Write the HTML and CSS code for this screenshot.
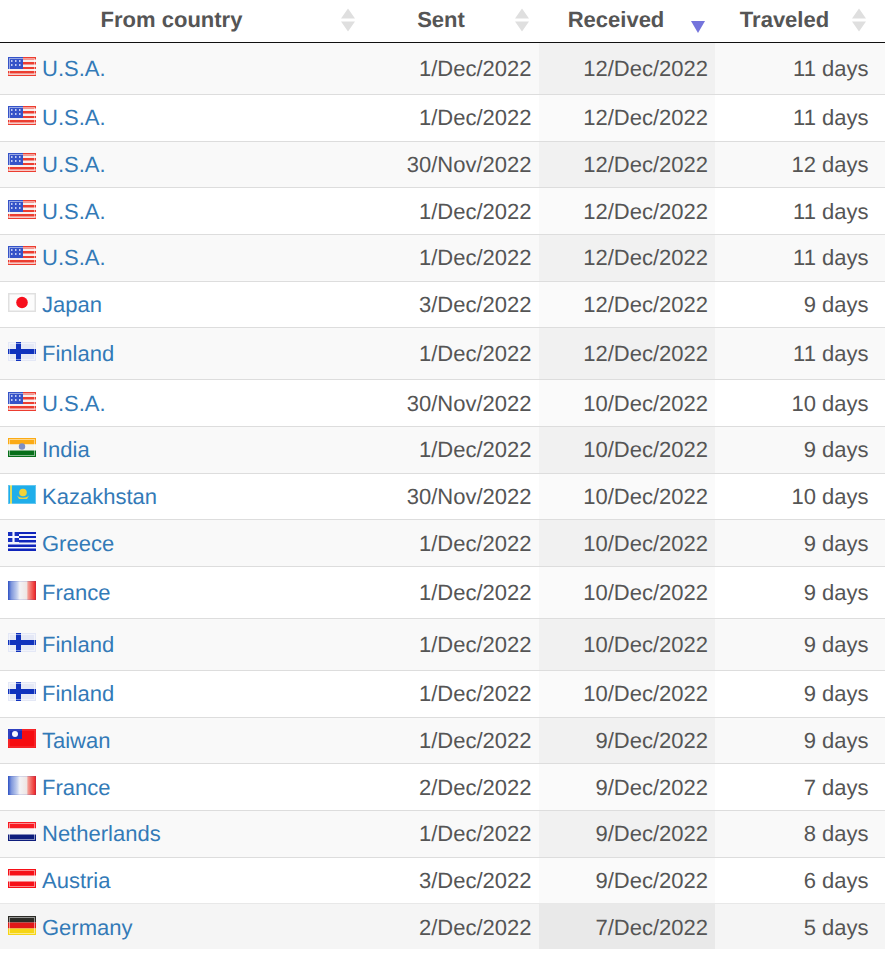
FILE: index.html
```html
<!DOCTYPE html>
<html lang="en">
<head>
<meta charset="utf-8">
<title>Postcards received</title>
<link rel="stylesheet" href="styles.css">
</head>
<body>
<svg class="defs" width="0" height="0" aria-hidden="true">
  <defs>
    <linearGradient id="frgrad" x1="0" x2="1" y1="0" y2="0">
      <stop offset="0" stop-color="#2f55c8"/><stop offset=".12" stop-color="#7f97dc"/><stop offset=".32" stop-color="#c3cfee"/><stop offset=".42" stop-color="#f3f3f6"/><stop offset=".66" stop-color="#efe6e4"/><stop offset=".72" stop-color="#f39a92"/><stop offset="1" stop-color="#ee1c1c"/>
    </linearGradient>
    <g id="gloss"><rect x="1.500" y="1.500" width="25" height="16" fill="none" stroke="#fff" stroke-opacity=".5"/></g>
    <symbol id="us" viewBox="0 0 28 19"><rect width="28" height="19" fill="#f6f0ee"/><path d="M0 0h28v2.500H0zM15 5h13v2.500H15zM15 10h13v2H15zM0 14h28v2.500H0zM0 17.500h28v1.500H0z" fill="#ec3d30"/><rect width="15" height="12" fill="#3553c8"/><path d="M3 4h1.500M7 4h1.500M11 4h1.500M3 8h1.500M7 8h1.500M11 8h1.500" stroke="#f0f4ff" stroke-width="1.400"/><use href="#gloss"/></symbol>
    <symbol id="jp" viewBox="0 0 28 19"><rect width="28" height="19" fill="#e0e0e0"/><rect x="1.500" y="1.500" width="25" height="16" fill="#fcfcfc"/><circle cx="14" cy="9.500" r="5.800" fill="#f70f1c"/></symbol>
    <symbol id="fi" viewBox="0 0 28 19"><rect width="28" height="19" fill="#e4e8f6"/><path d="M0 7h28v5H0zM8 0h5v19H8z" fill="#0f32bd"/><use href="#gloss"/></symbol>
    <symbol id="in" viewBox="0 0 28 19"><rect width="28" height="6.500" fill="#fbab14"/><rect y="6.500" width="28" height="6" fill="#f5f5ef"/><rect y="12.500" width="28" height="6.500" fill="#07701a"/><circle cx="14" cy="8.500" r="3.200" fill="#7d8fc4"/><use href="#gloss"/></symbol>
    <symbol id="kz" viewBox="0 0 28 19"><rect width="28" height="19" fill="#1faeea"/><rect x="2" width="2" height="19" fill="#dcdc60"/><circle cx="15" cy="7.500" r="3.800" fill="#f2d238"/><path d="M9 10.500c3 3 9 3 12 0l-2 3.500h-8z" fill="#e8d048"/><rect x=".5" y=".5" width="27" height="18" fill="none" stroke="#fff" stroke-opacity=".3"/></symbol>
    <symbol id="gr" viewBox="0 0 28 19"><rect width="28" height="19" fill="#f1f3fb"/><path d="M0 0h28v2H0zM11 4h17v2H11zM11 8h17v2.500H11zM0 12.500h28v2.500H0zM0 16.500h28v2.500H0z" fill="#0f24bb"/><rect width="11" height="10" fill="#1730c0"/><path d="M5.500 0v10M0 5h11" stroke="#f6f7ff" stroke-width="2.200"/></symbol>
    <symbol id="fr" viewBox="0 0 28 19"><rect width="28" height="19" fill="url(#frgrad)"/><rect x=".5" y=".5" width="27" height="18" fill="none" stroke="#2f45b0" stroke-opacity=".15"/></symbol>
    <symbol id="nl" viewBox="0 0 28 19"><rect width="28" height="6.500" fill="#f81a22"/><rect y="6.500" width="28" height="6" fill="#f8f8f8"/><rect y="12.500" width="28" height="6.500" fill="#0e1e7d"/><use href="#gloss"/></symbol>
    <symbol id="at" viewBox="0 0 28 19"><rect width="28" height="19" fill="#f61018"/><rect y="6.500" width="28" height="6" fill="#faf0f0"/><use href="#gloss"/></symbol>
    <symbol id="de" viewBox="0 0 28 19"><rect width="28" height="6.500" fill="#2b2b26"/><rect y="6.500" width="28" height="6" fill="#e01818"/><rect y="12.500" width="28" height="6.500" fill="#f6d514"/><use href="#gloss"/></symbol>
    <symbol id="tw" viewBox="0 0 28 19"><rect width="28" height="19" fill="#f60c10"/><rect width="14" height="10" fill="#1a2db8"/><circle cx="7" cy="5" r="3" fill="#f6f6ff"/><rect x="1" y="1" width="26" height="17" fill="none" stroke="#fff" stroke-opacity=".2"/></symbol>
  </defs>
</svg>
<table class="cards">
  <thead>
    <tr>
      <th class="col-from">From country<svg class="sort" viewBox="0 0 14 24"><path d="M7 0l7 10H0zM0 13h14l-7 10z"/></svg></th>
      <th class="col-sent">Sent<svg class="sort" viewBox="0 0 14 24"><path d="M7 0l7 10H0zM0 13h14l-7 10z"/></svg></th>
      <th class="col-recv">Received<svg class="sort sort-active" viewBox="0 0 14 12"><path d="M0 0h14l-7 12z"/></svg></th>
      <th class="col-trav">Traveled<svg class="sort" viewBox="0 0 14 24"><path d="M7 0l7 10H0zM0 13h14l-7 10z"/></svg></th>
    </tr>
  </thead>
  <tbody>
    <tr class="h51"><td><svg class="flag"><use href="#us"/></svg><a href="#">U.S.A.</a></td><td>1/Dec/2022</td><td>12/Dec/2022</td><td>11 days</td></tr>
    <tr class="h47"><td><svg class="flag"><use href="#us"/></svg><a href="#">U.S.A.</a></td><td>1/Dec/2022</td><td>12/Dec/2022</td><td>11 days</td></tr>
    <tr class="h46"><td><svg class="flag"><use href="#us"/></svg><a href="#">U.S.A.</a></td><td>30/Nov/2022</td><td>12/Dec/2022</td><td>12 days</td></tr>
    <tr class="h47 low"><td><svg class="flag"><use href="#us"/></svg><a href="#">U.S.A.</a></td><td>1/Dec/2022</td><td>12/Dec/2022</td><td>11 days</td></tr>
    <tr class="h47"><td><svg class="flag"><use href="#us"/></svg><a href="#">U.S.A.</a></td><td>1/Dec/2022</td><td>12/Dec/2022</td><td>11 days</td></tr>
    <tr class="h46"><td><svg class="flag"><use href="#jp"/></svg><a href="#">Japan</a></td><td>3/Dec/2022</td><td>12/Dec/2022</td><td>9 days</td></tr>
    <tr class="h52"><td><svg class="flag"><use href="#fi"/></svg><a href="#">Finland</a></td><td>1/Dec/2022</td><td>12/Dec/2022</td><td>11 days</td></tr>
    <tr class="h47 low"><td><svg class="flag"><use href="#us"/></svg><a href="#">U.S.A.</a></td><td>30/Nov/2022</td><td>10/Dec/2022</td><td>10 days</td></tr>
    <tr class="h47"><td><svg class="flag"><use href="#in"/></svg><a href="#">India</a></td><td>1/Dec/2022</td><td>10/Dec/2022</td><td>9 days</td></tr>
    <tr class="h46"><td><svg class="flag"><use href="#kz"/></svg><a href="#">Kazakhstan</a></td><td>30/Nov/2022</td><td>10/Dec/2022</td><td>10 days</td></tr>
    <tr class="h47 low"><td><svg class="flag"><use href="#gr"/></svg><a href="#">Greece</a></td><td>1/Dec/2022</td><td>10/Dec/2022</td><td>9 days</td></tr>
    <tr class="h52"><td><svg class="flag"><use href="#fr"/></svg><a href="#">France</a></td><td>1/Dec/2022</td><td>10/Dec/2022</td><td>9 days</td></tr>
    <tr class="h52"><td><svg class="flag"><use href="#fi"/></svg><a href="#">Finland</a></td><td>1/Dec/2022</td><td>10/Dec/2022</td><td>9 days</td></tr>
    <tr class="h47"><td><svg class="flag"><use href="#fi"/></svg><a href="#">Finland</a></td><td>1/Dec/2022</td><td>10/Dec/2022</td><td>9 days</td></tr>
    <tr class="h46"><td><svg class="flag"><use href="#tw"/></svg><a href="#">Taiwan</a></td><td>1/Dec/2022</td><td>9/Dec/2022</td><td>9 days</td></tr>
    <tr class="h47 low"><td><svg class="flag"><use href="#fr"/></svg><a href="#">France</a></td><td>2/Dec/2022</td><td>9/Dec/2022</td><td>7 days</td></tr>
    <tr class="h47"><td><svg class="flag"><use href="#nl"/></svg><a href="#">Netherlands</a></td><td>1/Dec/2022</td><td>9/Dec/2022</td><td>8 days</td></tr>
    <tr class="h46"><td><svg class="flag"><use href="#at"/></svg><a href="#">Austria</a></td><td>3/Dec/2022</td><td>9/Dec/2022</td><td>6 days</td></tr>
    <tr class="h46 last low"><td><svg class="flag"><use href="#de"/></svg><a href="#">Germany</a></td><td>2/Dec/2022</td><td>7/Dec/2022</td><td>5 days</td></tr>
  </tbody>
</table>
</body>
</html>
```
FILE: styles.css
```css
html, body {
  margin: 0;
  padding: 0;
  background: #fff;
}

.defs {
  position: absolute;
}

.cards {
  width: 885px;
  table-layout: fixed;
  border-collapse: separate;
  border-spacing: 0;
  font: 22px/30px "Liberation Sans", Arial, sans-serif;
  color: #555;
  text-rendering: geometricPrecision;
}

.cards th {
  position: relative;
  height: 43px;
  padding: 0 30px 9px 8px;
  box-sizing: border-box;
  border-bottom: 1px solid #111;
  text-align: center;
  font-weight: 700;
  line-height: 26px;
  vertical-align: bottom;
}

.col-from { width: 365px; }
.col-sent { width: 174px; }
.col-recv { width: 176px; }
.col-trav { width: 170px; }

.cards th.col-trav { padding-right: 39px; }

.sort {
  position: absolute;
  right: 10px;
  top: 8px;
  width: 14px;
  height: 25px;
  fill: #dfdfdf;
}

.sort-active {
  top: 21px;
  height: 12px;
  fill: #7474dc;
}

.col-trav .sort { right: 19px; }

.cards td {
  box-sizing: border-box;
  padding: 0 7px;
  border-top: 1px solid #ddd;
  text-align: right;
  vertical-align: middle;
  background: #fff;
}

.cards tbody tr:first-child td { border-top: 0; }

.cards td:first-child { padding-left: 8px; text-align: left; }
.cards td:nth-child(2) { padding-right: 7.5px; }
.cards td:last-child { padding-right: 16.5px; }

.cards tbody tr:nth-child(odd) td { background: #f9f9f9; }
.cards tbody tr:nth-child(odd) td:nth-child(3) { background: #f1f1f1; }
.cards tbody tr:nth-child(even) td:nth-child(3) { background: #fafafa; }
.cards tbody tr.last td { height: 46px; background: #f5f5f5; border-top-color: #e8e8e8; }
.cards tbody tr.last td:nth-child(3) { background: #e9e9e9; }

.h51 td { height: 51px; }
.h52 td { height: 52px; }
.h47 td { height: 47px; }
.h46 td { height: 46px; }

.cards tbody tr.low td { padding-top: 2px; }

.flag {
  width: 28px;
  height: 19px;
  margin-right: 6px;
  vertical-align: 0;
  filter: blur(0.5px);
}

.cards a {
  color: #337ab7;
  text-decoration: none;
}
```
